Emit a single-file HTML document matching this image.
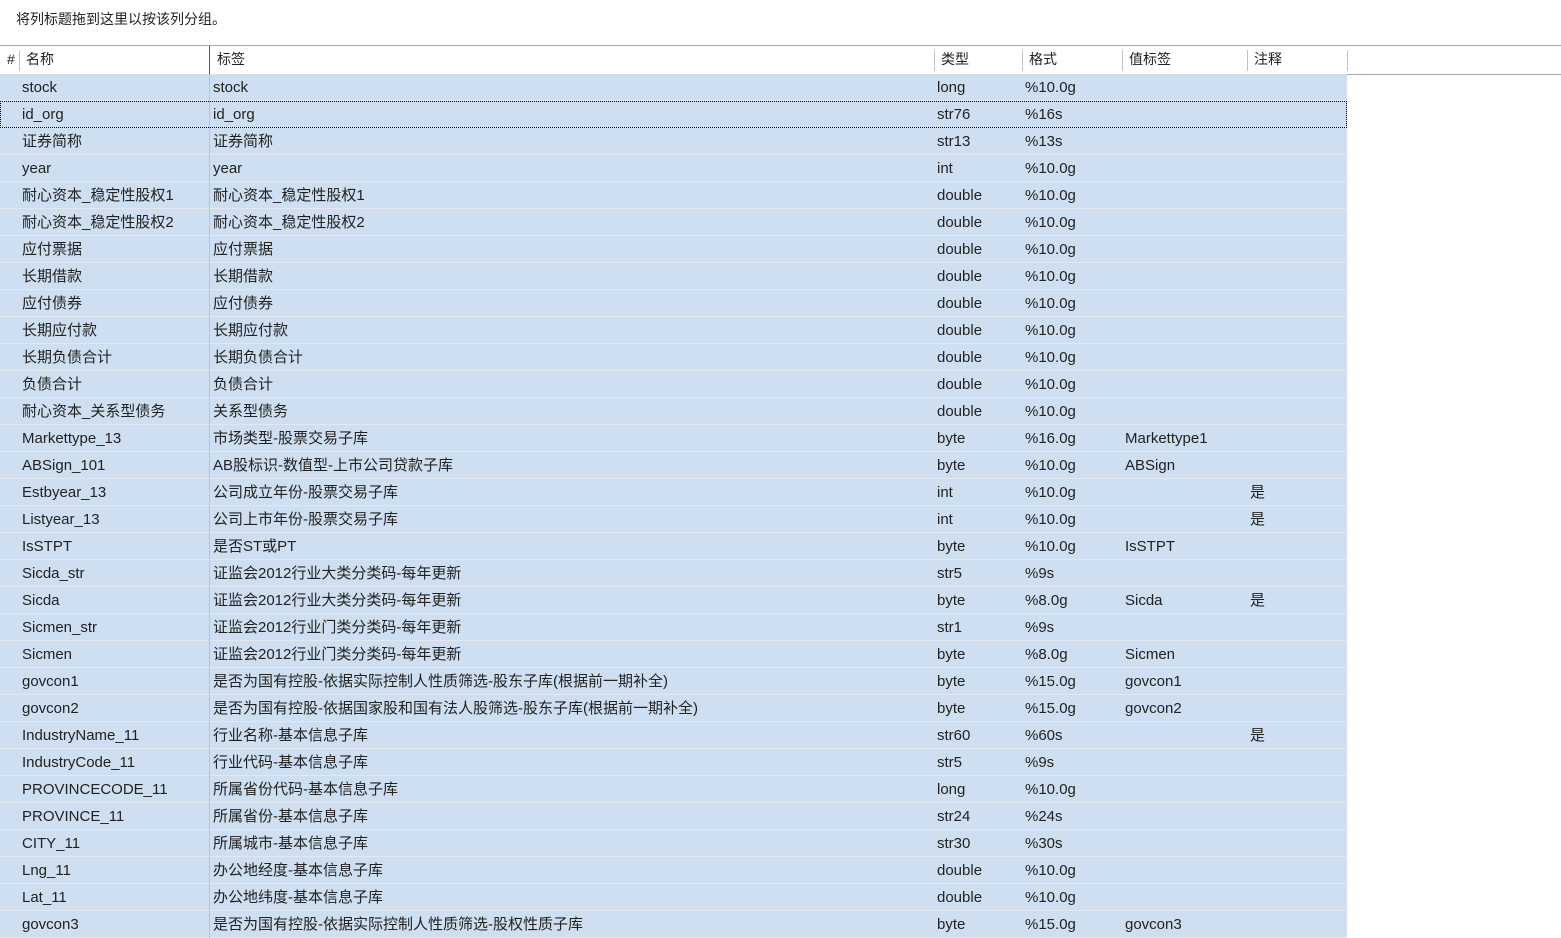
<!DOCTYPE html>
<html><head><meta charset="utf-8"><style>
body{margin:0;width:1561px;height:919px;overflow:hidden;background:#fff;font-family:"Liberation Sans","Noto Sans CJK SC",sans-serif;font-size:15px;color:#222}
.top{position:absolute;left:16px;top:9px;font-size:14px}
.hdr{position:absolute;left:0;top:45px;width:1561px;height:28px;border-top:1px solid #a8a8a8;border-bottom:1px solid #a8a8a8;}
.hdr span{position:absolute;top:0;line-height:27px;font-size:14px}
.hdr i{position:absolute;top:4px;height:21px;width:1px;background:#c0c0c0}
.rows{position:absolute;left:0;top:74px;width:1347px}
.r{position:relative;height:26px;border-bottom:1px solid #e2e8ee;background:#cddff0}
.r span{position:absolute;top:0;line-height:27px;height:27px;white-space:nowrap}
.r .d{position:absolute;left:209px;top:0;width:1px;height:27px;background:#f0b488}
.sel{outline:1px dotted #000;outline-offset:-1px}
</style></head><body>
<div class="top">将列标题拖到这里以按该列分组。</div>
<div class="hdr">
<span style="left:7px">#</span><i style="left:19px"></i>
<span style="left:26px">名称</span><i style="left:209px;background:#3a5a7a;top:0;height:28px"></i>
<span style="left:217px">标签</span><i style="left:934px"></i>
<span style="left:941px">类型</span><i style="left:1022px"></i>
<span style="left:1029px">格式</span><i style="left:1122px"></i>
<span style="left:1129px">值标签</span><i style="left:1247px"></i>
<span style="left:1254px">注释</span><i style="left:1347px"></i>
</div>
<div class="rows" id="rows"></div>
<script>
var d=[["stock","stock","long","%10.0g","",""],["id_org","id_org","str76","%16s","",""],["证券简称","证券简称","str13","%13s","",""],["year","year","int","%10.0g","",""],["耐心资本_稳定性股权1","耐心资本_稳定性股权1","double","%10.0g","",""],["耐心资本_稳定性股权2","耐心资本_稳定性股权2","double","%10.0g","",""],["应付票据","应付票据","double","%10.0g","",""],["长期借款","长期借款","double","%10.0g","",""],["应付债券","应付债券","double","%10.0g","",""],["长期应付款","长期应付款","double","%10.0g","",""],["长期负债合计","长期负债合计","double","%10.0g","",""],["负债合计","负债合计","double","%10.0g","",""],["耐心资本_关系型债务","关系型债务","double","%10.0g","",""],["Markettype_13","市场类型-股票交易子库","byte","%16.0g","Markettype1",""],["ABSign_101","AB股标识-数值型-上市公司贷款子库","byte","%10.0g","ABSign",""],["Estbyear_13","公司成立年份-股票交易子库","int","%10.0g","","是"],["Listyear_13","公司上市年份-股票交易子库","int","%10.0g","","是"],["IsSTPT","是否ST或PT","byte","%10.0g","IsSTPT",""],["Sicda_str","证监会2012行业大类分类码-每年更新","str5","%9s","",""],["Sicda","证监会2012行业大类分类码-每年更新","byte","%8.0g","Sicda","是"],["Sicmen_str","证监会2012行业门类分类码-每年更新","str1","%9s","",""],["Sicmen","证监会2012行业门类分类码-每年更新","byte","%8.0g","Sicmen",""],["govcon1","是否为国有控股-依据实际控制人性质筛选-股东子库(根据前一期补全)","byte","%15.0g","govcon1",""],["govcon2","是否为国有控股-依据国家股和国有法人股筛选-股东子库(根据前一期补全)","byte","%15.0g","govcon2",""],["IndustryName_11","行业名称-基本信息子库","str60","%60s","","是"],["IndustryCode_11","行业代码-基本信息子库","str5","%9s","",""],["PROVINCECODE_11","所属省份代码-基本信息子库","long","%10.0g","",""],["PROVINCE_11","所属省份-基本信息子库","str24","%24s","",""],["CITY_11","所属城市-基本信息子库","str30","%30s","",""],["Lng_11","办公地经度-基本信息子库","double","%10.0g","",""],["Lat_11","办公地纬度-基本信息子库","double","%10.0g","",""],["govcon3","是否为国有控股-依据实际控制人性质筛选-股权性质子库","byte","%15.0g","govcon3",""]];
var x=[22,213,937,1025,1125,1250],h="";
d.forEach(function(r,i){h+='<div class="r'+(i==1?' sel':'')+'"><b class="d"></b>';r.forEach(function(c,j){if(c)h+='<span style="left:'+x[j]+'px">'+c+'</span>'});h+='</div>'});
document.getElementById('rows').innerHTML=h;
</script>
</body></html>
